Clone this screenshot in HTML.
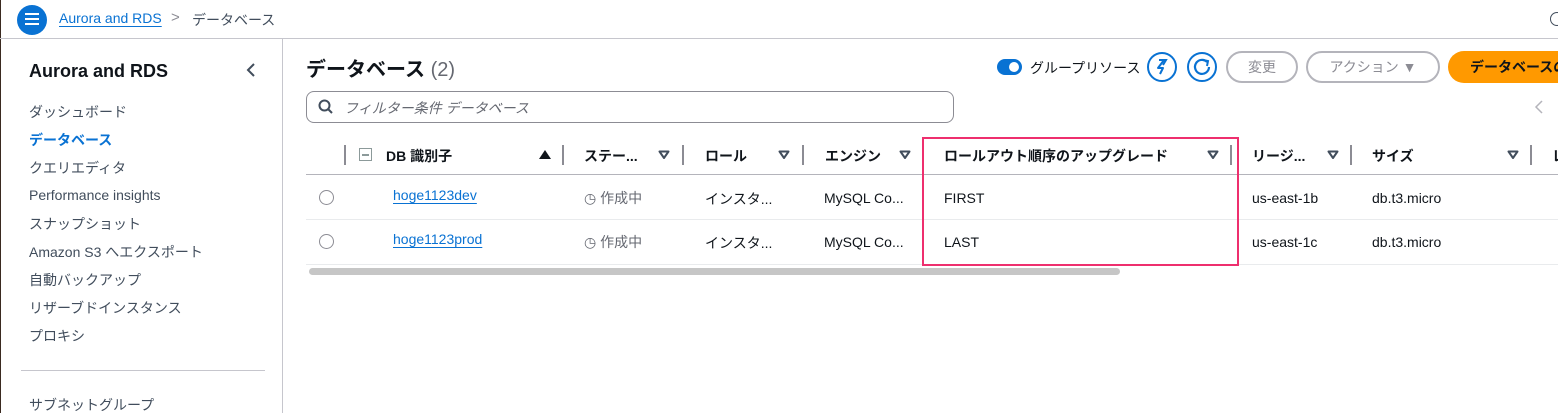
<!DOCTYPE html>
<html><head><meta charset="utf-8"><style>
*{margin:0;padding:0;box-sizing:border-box}
body{width:1558px;height:413px;overflow:hidden;background:#fff;font-family:"Liberation Sans","Noto Sans CJK JP",sans-serif;color:#0f141a;position:relative}
.a{position:absolute;white-space:nowrap}
.nav{font-size:14px;color:#414d5c}
.th{font-size:14px;font-weight:bold;color:#0f141a;top:146px}
.sep{position:absolute;top:145px;width:2px;height:20px;background:#8c8c94}
.tri{position:absolute;top:150px}
.td{font-size:14px;color:#0f141a}
.lnk{color:#0972d3;text-decoration:underline;text-underline-offset:3px}
.btn{position:absolute;top:51px;height:32px;border:2px solid #b4b4bb;border-radius:16px;font-size:14px;color:#8c8c94;text-align:center;line-height:28px}
</style></head><body>
<div class="a" style="left:0;top:0;width:1px;height:413px;background:#3a2a20"></div>
<div class="a" style="left:17px;top:5px;width:30px;height:30px;border-radius:50%;background:#0972d3"></div>
<div class="a" style="left:25px;top:13px;width:14px;height:2px;background:#fff;box-shadow:0 5px 0 #fff,0 10px 0 #fff"></div>
<div class="a lnk" style="left:59px;top:10px;font-size:14px">Aurora and RDS</div>
<div class="a" style="left:171px;top:9px;font-size:15px;color:#8c8c94">&gt;</div>
<div class="a" style="left:192px;top:10px;font-size:14px;color:#414d5c">データベース</div>
<div class="a" style="left:1550px;top:12px;width:14px;height:14px;border:1.5px solid #414d5c;border-radius:50%"></div>
<div class="a" style="left:0;top:38px;width:1558px;height:1px;background:#c6c6cd"></div>
<div class="a" style="left:282px;top:39px;width:1px;height:374px;background:#c6c6cd"></div>
<div class="a" style="left:29px;top:61px;font-size:18px;font-weight:bold">Aurora and RDS</div>
<svg class="a" style="left:245px;top:62px" width="12" height="16"><path d="M9 2L3 8L9 14" stroke="#414d5c" stroke-width="2" fill="none"/></svg>
<div class="a nav" style="left:29px;top:102px">ダッシュボード</div>
<div class="a nav" style="left:29px;top:130px;color:#0972d3;font-weight:bold">データベース</div>
<div class="a nav" style="left:29px;top:158px">クエリエディタ</div>
<div class="a nav" style="left:29px;top:187px">Performance insights</div>
<div class="a nav" style="left:29px;top:214px">スナップショット</div>
<div class="a nav" style="left:29px;top:242px">Amazon S3 へエクスポート</div>
<div class="a nav" style="left:29px;top:270px">自動バックアップ</div>
<div class="a nav" style="left:29px;top:298px">リザーブドインスタンス</div>
<div class="a nav" style="left:29px;top:326px">プロキシ</div>
<div class="a" style="left:21px;top:370px;width:244px;height:1px;background:#c6c6cd"></div>
<div class="a nav" style="left:29px;top:395px">サブネットグループ</div>
<div class="a" style="left:306px;top:53px;font-size:20px;font-weight:bold">データベース <span style="color:#656871;font-weight:normal">(2)</span></div>
<div class="a" style="left:997px;top:59px;width:25px;height:16px;border-radius:8px;background:#0972d3"></div>
<div class="a" style="left:1009px;top:62px;width:10px;height:10px;border-radius:50%;background:#fff"></div>
<div class="a" style="left:1030px;top:58px;font-size:14px;color:#0f141a">グループリソース</div>
<svg class="a" style="left:1146px;top:51px" width="32" height="32"><circle cx="16" cy="16" r="14" stroke="#0972d3" stroke-width="2" fill="none"/><path d="M18 9L12 17H17L14 23" stroke="#0972d3" stroke-width="2" fill="none" stroke-linejoin="round"/><path d="M13 9h7l-3 5" stroke="#0972d3" stroke-width="2" fill="none"/></svg>
<svg class="a" style="left:1186px;top:51px" width="32" height="32"><circle cx="16" cy="16" r="14" stroke="#0972d3" stroke-width="2" fill="none"/><path d="M21 11A7 7 0 1 0 23 16" stroke="#0972d3" stroke-width="2.2" fill="none"/><path d="M17 9L22 10L21 15" stroke="#0972d3" stroke-width="2" fill="none"/></svg>
<div class="btn" style="left:1226px;width:72px">変更</div>
<div class="btn" style="left:1306px;width:134px">アクション ▼</div>
<div class="a" style="left:1448px;top:51px;width:130px;height:32px;border-radius:16px;background:#ff9900;font-size:14px;font-weight:bold;line-height:32px;padding-left:22px">データベースの作成</div>
<div class="a" style="left:306px;top:91px;width:648px;height:32px;border:1px solid #8c8c94;border-radius:8px"></div>
<svg class="a" style="left:318px;top:99px" width="16" height="16"><circle cx="6.5" cy="6.5" r="5" stroke="#414d5c" stroke-width="2" fill="none"/><path d="M10 10L14 14" stroke="#414d5c" stroke-width="2"/></svg>
<div class="a" style="left:344px;top:98px;font-size:14px;font-style:italic;color:#656871">フィルター条件 データベース</div>
<svg class="a" style="left:1533px;top:99px" width="12" height="16"><path d="M9 2L3 8L9 14" stroke="#b4b4bb" stroke-width="1.5" fill="none"/></svg>
<div class="sep" style="left:344px"></div>
<div class="a" style="left:359px;top:148px;width:13px;height:13px;border:1.5px solid #8c9a9a"></div>
<div class="a" style="left:362px;top:154px;width:7px;height:1.5px;background:#8c9a9a"></div>
<div class="a th" style="left:386px">DB 識別子</div>
<div class="a" style="left:539px;top:150px;width:0;height:0;border-left:6px solid transparent;border-right:6px solid transparent;border-bottom:9px solid #0f141a"></div>
<div class="sep" style="left:562px"></div>
<div class="a th" style="left:584px">ステー...</div>
<svg class="tri" style="left:658px" width="12" height="10"><path d="M1.5 1.5H10.5L6 8Z" stroke="#414d5c" stroke-width="2" fill="none" stroke-linejoin="round"/></svg>
<div class="sep" style="left:682px"></div>
<div class="a th" style="left:705px">ロール</div>
<svg class="tri" style="left:778px" width="12" height="10"><path d="M1.5 1.5H10.5L6 8Z" stroke="#414d5c" stroke-width="2" fill="none" stroke-linejoin="round"/></svg>
<div class="sep" style="left:802px"></div>
<div class="a th" style="left:825px">エンジン</div>
<svg class="tri" style="left:899px" width="12" height="10"><path d="M1.5 1.5H10.5L6 8Z" stroke="#414d5c" stroke-width="2" fill="none" stroke-linejoin="round"/></svg>
<div class="sep" style="left:922px"></div>
<div class="a th" style="left:944px">ロールアウト順序のアップグレード</div>
<svg class="tri" style="left:1207px" width="12" height="10"><path d="M1.5 1.5H10.5L6 8Z" stroke="#414d5c" stroke-width="2" fill="none" stroke-linejoin="round"/></svg>
<div class="sep" style="left:1230px"></div>
<div class="a th" style="left:1252px">リージ...</div>
<svg class="tri" style="left:1327px" width="12" height="10"><path d="M1.5 1.5H10.5L6 8Z" stroke="#414d5c" stroke-width="2" fill="none" stroke-linejoin="round"/></svg>
<div class="sep" style="left:1350px"></div>
<div class="a th" style="left:1372px">サイズ</div>
<svg class="tri" style="left:1507px" width="12" height="10"><path d="M1.5 1.5H10.5L6 8Z" stroke="#414d5c" stroke-width="2" fill="none" stroke-linejoin="round"/></svg>
<div class="sep" style="left:1530px"></div>
<div class="a th" style="left:1552px">レ</div>
<div class="a" style="left:306px;top:174px;width:1252px;height:1px;background:#b4b4bb"></div>
<div class="a" style="left:319px;top:190px;width:15px;height:15px;border:1px solid #8c8c94;border-radius:50%"></div>
<div class="a td lnk" style="left:393px;top:187px">hoge1123dev</div>
<div class="a td" style="left:584px;top:188px;color:#656871">◷ 作成中</div>
<div class="a td" style="left:705px;top:189px">インスタ...</div>
<div class="a td" style="left:824px;top:190px">MySQL Co...</div>
<div class="a td" style="left:944px;top:190px">FIRST</div>
<div class="a td" style="left:1252px;top:190px">us-east-1b</div>
<div class="a td" style="left:1372px;top:190px">db.t3.micro</div>
<div class="a" style="left:306px;top:219px;width:1252px;height:1px;background:#e9ebed"></div>
<div class="a" style="left:319px;top:234px;width:15px;height:15px;border:1px solid #8c8c94;border-radius:50%"></div>
<div class="a td lnk" style="left:393px;top:231px">hoge1123prod</div>
<div class="a td" style="left:584px;top:232px;color:#656871">◷ 作成中</div>
<div class="a td" style="left:705px;top:233px">インスタ...</div>
<div class="a td" style="left:824px;top:234px">MySQL Co...</div>
<div class="a td" style="left:944px;top:234px">LAST</div>
<div class="a td" style="left:1252px;top:234px">us-east-1c</div>
<div class="a td" style="left:1372px;top:234px">db.t3.micro</div>
<div class="a" style="left:306px;top:264px;width:1252px;height:1px;background:#e9ebed"></div>
<div class="a" style="left:309px;top:268px;width:811px;height:7px;border-radius:4px;background:#c6c6c6"></div>
<div class="a" style="left:922px;top:137px;width:317px;height:129px;border:2px solid #ee2f6e"></div>
</body></html>
